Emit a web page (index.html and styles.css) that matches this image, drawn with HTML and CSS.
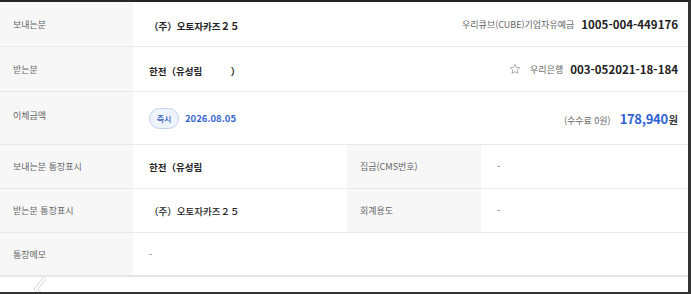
FILE: index.html
```html
<!DOCTYPE html>
<html lang="ko">
<head>
    <meta charset="UTF-8">
    <meta name="viewport" content="width=device-width, initial-scale=1.0">
    <title>이체 상세</title>
    <link rel="stylesheet" href="styles.css">
</head>
<body>
    <div class="frame">
        <div class="row">
            <div class="label">보내는분</div>
            <div class="value split">
                <span class="name">（주）오토자카즈２５</span>
                <span class="account"><span class="bank">우리큐브(CUBE)기업자유예금</span><span class="acctno">1005-004-449176</span></span>
            </div>
        </div>
        <div class="row">
            <div class="label">받는분</div>
            <div class="value split">
                <span class="name">한전（유성림　　　）</span>
                <span class="account">
                    <svg class="star" width="12" height="12" viewBox="0 0 24 24"><path d="M12 2.5l2.9 6.2 6.6.8-4.9 4.6 1.3 6.6L12 17.4l-5.9 3.3 1.3-6.6-4.9-4.6 6.6-.8z" fill="none" stroke="#9a9a9a" stroke-width="1.6" stroke-linejoin="round"/></svg>
                    <span class="bank">우리은행</span><span class="acctno">003-052021-18-184</span>
                </span>
            </div>
        </div>
        <div class="row tall">
            <div class="label raised">이체금액</div>
            <div class="value split">
                <span class="when"><span class="badge">즉시</span><span class="date">2026.08.05</span></span>
                <span class="amount"><span class="fee">(수수료 0원)</span><span class="sum">178,940</span><span class="won">원</span></span>
            </div>
        </div>
        <div class="row">
            <div class="label">보내는분 통장표시</div>
            <div class="value narrow plain">한전（유성림</div>
            <div class="label second">집금(CMS번호)</div>
            <div class="value dash">-</div>
        </div>
        <div class="row">
            <div class="label">받는분 통장표시</div>
            <div class="value narrow plain light">（주）오토자카즈２５</div>
            <div class="label second">회계용도</div>
            <div class="value dash">-</div>
        </div>
        <div class="row last">
            <div class="label">통장메모</div>
            <div class="value dash">-</div>
        </div>
        <div class="footer">
            <svg class="prev" width="14" height="24" viewBox="0 0 14 24">
                <polyline points="12,1 3,12 12,23" fill="none" stroke="#dadada" stroke-width="4" stroke-linejoin="miter"/>
                <polyline points="12,1 3,12 12,23" fill="none" stroke="#ffffff" stroke-width="2" stroke-linejoin="miter"/>
            </svg>
        </div>
    </div>
</body>
</html>
```

FILE: styles.css
```css
html, body {
    margin: 0;
    padding: 0;
    background: #ffffff;
}

body {
    font-family: "Noto Sans CJK KR", "Noto Sans", sans-serif;
    color: #222222;
}

.frame {
    width: 691px;
    height: 294px;
    box-sizing: border-box;
    border-top: 2px solid #262626;
    border-right: 3px solid #333333;
    border-bottom: 2px solid #333333;
    overflow: hidden;
}

.row {
    display: flex;
    height: 45px;
    box-sizing: border-box;
    border-bottom: 1px solid #e9e9e9;
}
.row.tall {
    height: 53px;
}
.row:nth-child(4),
.row:nth-child(5) {
    height: 44px;
}
.row.last {
    height: 44px;
    border-bottom: 2px solid #e6e6e6;
}

.label {
    width: 133px;
    flex-shrink: 0;
    box-sizing: border-box;
    padding-left: 13px;
    background: #f7f7f7;
    color: #666666;
    font-size: 9px;
    display: flex;
    align-items: center;
}
.label.raised {
    padding-bottom: 6px;
}
.label.second {
    width: 134px;
}

.value {
    flex: 1;
    box-sizing: border-box;
    padding: 0 10px 0 16px;
    display: flex;
    align-items: center;
}
.value.narrow {
    flex: none;
    width: 214px;
}
.split {
    justify-content: space-between;
}

.name {
    font-size: 9.5px;
    font-weight: 700;
    padding-top: 3px;
}
.plain {
    font-size: 9.5px;
    font-weight: 600;
}
.plain.light {
    font-weight: 500;
}
.dash {
    font-size: 9px;
    color: #555555;
}

.account {
    display: flex;
    align-items: center;
}
.star {
    margin-right: 9px;
}
.bank {
    font-size: 9px;
    color: #666666;
    margin-right: 7px;
}
.acctno {
    font-size: 11.5px;
    font-weight: 700;
    color: #222222;
}

.when {
    display: flex;
    align-items: center;
}
.badge {
    display: inline-flex;
    align-items: center;
    justify-content: center;
    width: 30px;
    height: 21px;
    box-sizing: border-box;
    border: 1px solid #c3d1ee;
    border-radius: 11px;
    background: #eef3fc;
    color: #3560c0;
    font-size: 8px;
    font-weight: 500;
    margin-right: 6px;
}
.date {
    font-size: 9.5px;
    font-weight: 700;
    color: #3566d0;
}

.amount {
    display: flex;
    align-items: baseline;
}
.fee {
    font-size: 9px;
    color: #666666;
    margin-right: 9px;
}
.sum {
    font-size: 13px;
    font-weight: 700;
    color: #2f62d1;
    letter-spacing: -0.3px;
}
.won {
    font-size: 10px;
    font-weight: 700;
    color: #333333;
    margin-left: 1px;
}

.footer {
    height: 15px;
    padding-left: 33px;
    overflow: hidden;
}
.prev {
    display: block;
}
```
